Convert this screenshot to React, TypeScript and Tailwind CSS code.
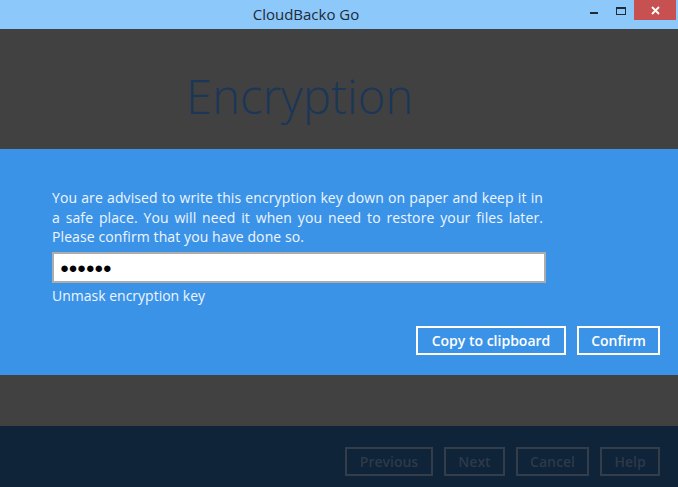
import React from "react";

export default function App() {
  const font = { fontFamily: '"Open Sans", "Noto Sans", sans-serif' };
  return (
    <div className="w-[678px] h-[487px] flex flex-col overflow-hidden bg-[#414141]" style={font}>
      {/* Title bar */}
      <div className="h-[29px] bg-[#8cc8fa] flex items-start relative shrink-0">
        <div className="flex-1 h-full flex items-center justify-center text-[15px] text-[#1f2a36] pr-[66px]">
          CloudBacko Go
        </div>
        <div className="absolute right-[2px] top-0 flex items-start">
          <div className="w-[27px] h-[20px] flex items-start justify-center pt-[12px]">
            <div className="w-[8px] h-[2px] bg-[#1f2a36]" />
          </div>
          <div className="w-[27px] h-[20px] flex items-start justify-center pt-[7px]">
            <div className="w-[10px] h-[8px] border border-[#1f2a36] border-t-2" />
          </div>
          <div className="w-[42px] h-[20px] bg-[#c75050] flex items-center justify-center">
            <svg width="9" height="9" viewBox="0 0 9 9">
              <path d="M1 1 L8 8 M8 1 L1 8" stroke="#fff" strokeWidth="1.8" />
            </svg>
          </div>
        </div>
      </div>

      {/* Heading area */}
      <div className="h-[120px] shrink-0 bg-[#414141] pl-[186px] pt-[44px]">
        <div className="text-[47px] font-light leading-none text-[#1b3657] tracking-[0.2px]">Encryption</div>
      </div>

      {/* Blue dialog */}
      <div className="h-[226px] shrink-0 bg-[#3b93e8] px-[52px] pt-[39px] flex flex-col">
        <p className="w-[491px] text-[14px] leading-[19.5px] text-[#eef6ff] text-justify tracking-[0.1px]">
          You are advised to write this encryption key down on paper and keep it in a safe place. You will need it when you need to restore your files later. Please confirm that you have done so.
        </p>
        <div className="mt-[5px] w-[494px] h-[31px] bg-white border-2 border-[#acacac] flex items-center pl-[6px]">
          <span className="text-[15px] text-black tracking-[-0.5px] leading-none">●●●●●●</span>
        </div>
        <div className="mt-[2px] text-[14px] text-[#eef6ff]">Unmask encryption key</div>
        <div className="mt-[20px] flex justify-end gap-[11px] mr-[-34px]">
          <button className="h-[29px] w-[150px] border-2 border-white text-white text-[14px] font-semibold flex items-center justify-center">
            Copy to clipboard
          </button>
          <button className="h-[29px] w-[83px] border-2 border-white text-white text-[14px] font-semibold flex items-center justify-center">
            Confirm
          </button>
        </div>
      </div>

      {/* Gray spacer */}
      <div className="h-[51px] shrink-0 bg-[#414141]" />

      {/* Footer */}
      <div className="flex-1 bg-[#0f2339] flex justify-end items-start pt-[21px] pr-[18px] gap-[11px]">
        {[
          ["Previous", "w-[88px]"],
          ["Next", "w-[61px]"],
          ["Cancel", "w-[73px]"],
          ["Help", "w-[60px]"],
        ].map(([t, w]) => (
          <div
            key={t}
            className={`${w} h-[29px] border-2 border-[#343e4a] text-[#2d3a49] text-[14px] font-semibold flex items-center justify-center`}
          >
            {t}
          </div>
        ))}
      </div>
    </div>
  );
}
